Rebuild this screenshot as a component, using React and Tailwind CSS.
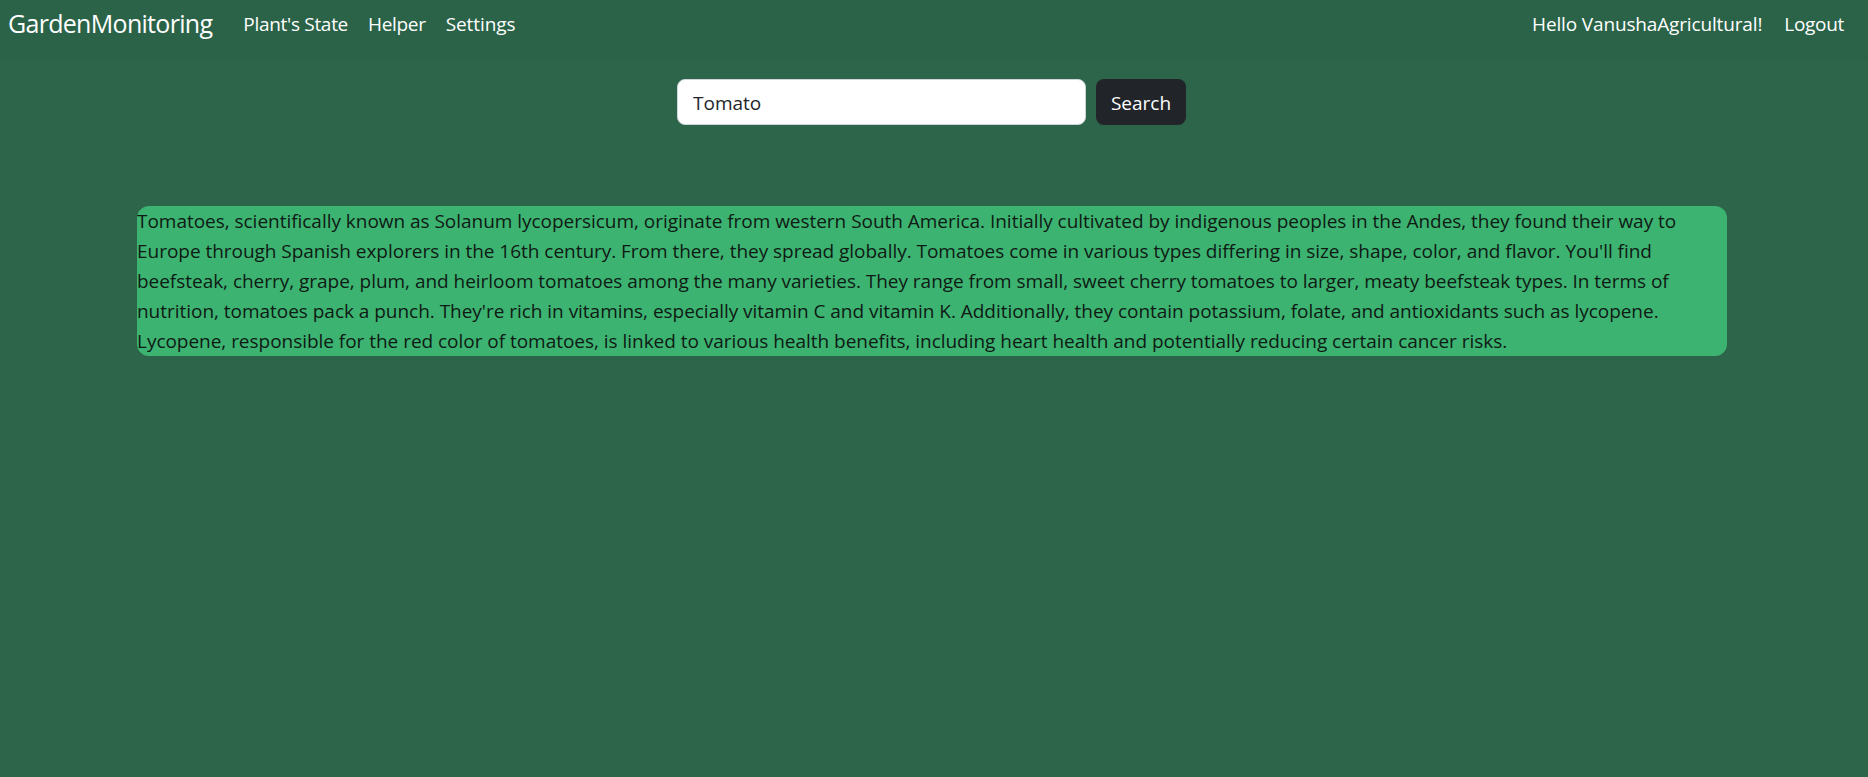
import React, { useState } from 'react';

const lines = [
    "Tomatoes, scientifically known as Solanum lycopersicum, originate from western South America. Initially cultivated by indigenous peoples in the Andes, they found their way to",
    "Europe through Spanish explorers in the 16th century. From there, they spread globally. Tomatoes come in various types differing in size, shape, color, and flavor. You'll find",
    "beefsteak, cherry, grape, plum, and heirloom tomatoes among the many varieties. They range from small, sweet cherry tomatoes to larger, meaty beefsteak types. In terms of",
    "nutrition, tomatoes pack a punch. They're rich in vitamins, especially vitamin C and vitamin K. Additionally, they contain potassium, folate, and antioxidants such as lycopene.",
    "Lycopene, responsible for the red color of tomatoes, is linked to various health benefits, including heart health and potentially reducing certain cancer risks.",
];

const App = () => {
    const [query, setQuery] = useState('Tomato');

    return (
        <div className="min-h-[777px] bg-[#2c654a] font-['Open_Sans',sans-serif]">
            {/* Navbar */}
            <nav className="h-[58px] bg-[#2b6349] flex items-center justify-between pl-[8px] pr-[24px] pb-[10px] shadow-[0_1px_2px_rgba(0,0,0,0.06)]">
                <div className="flex items-center">
                    <a href="#home" className="text-white text-[25px] tracking-[-0.7px] mr-[21px]">GardenMonitoring</a>
                    <a href="#state" className="text-white text-[19px] tracking-[-0.3px] px-[10px]">Plant's State</a>
                    <a href="#helper" className="text-white text-[19px] tracking-[-0.3px] px-[10px]">Helper</a>
                    <a href="#settings" className="text-white text-[19px] tracking-[-0.1px] px-[10px]">Settings</a>
                </div>
                <div className="flex items-center gap-[22px]">
                    <span className="text-white text-[19px] tracking-[-0.15px]">Hello VanushaAgricultural!</span>
                    <a href="#logout" className="text-white text-[19px] tracking-[-0.3px]">Logout</a>
                </div>
            </nav>

            {/* Search */}
            <div className="flex justify-center gap-[10px] mt-[21px] pr-[5px]">
                <input
                    value={query}
                    onChange={(e) => setQuery(e.target.value)}
                    className="w-[409px] h-[46px] bg-white rounded-lg border border-[#ced4da] px-[15px] pt-[2px] text-[19px] text-[#212529] outline-none"
                />
                <button className="w-[90px] h-[46px] rounded-lg bg-[#212529] text-white text-[19px] pt-[2px]">Search</button>
            </div>

            {/* Plant info */}
            <div className="mt-[81px] ml-[137px] w-[1590px] rounded-xl bg-[#3cb371] text-[#0f1a14] text-[19px] leading-[30px] tracking-[-0.03px]">
                {lines.map((line, i) => (
                    <div key={i} className="whitespace-nowrap">{line}</div>
                ))}
            </div>
        </div>
    );
};

export default App;
